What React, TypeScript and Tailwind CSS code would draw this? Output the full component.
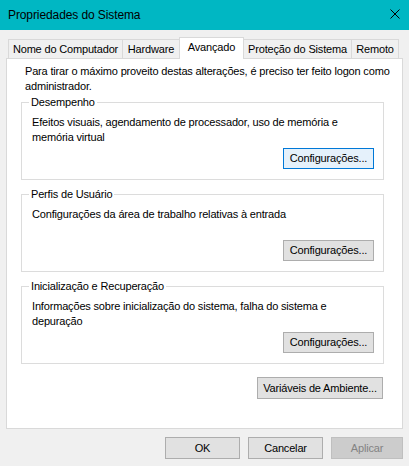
import React from "react";

const tabs = [
  { label: "Nome do Computador", w: "w-[115px]" },
  { label: "Hardware", w: "w-[58px]" },
  { label: "Avançado", w: "w-[65px]", active: true },
  { label: "Proteção do Sistema", w: "w-[109px]" },
  { label: "Remoto", w: "w-[48px]" },
];

function Btn({
  children,
  className = "",
  focused,
  disabled,
}: {
  children: React.ReactNode;
  className?: string;
  focused?: boolean;
  disabled?: boolean;
}) {
  const tone = disabled
    ? "bg-[#cccccc] border-[#bfbfbf] text-[#838383]"
    : focused
      ? "bg-[#e5f1fb] border-[#0078d7] text-black"
      : "bg-[#e1e1e1] border-[#adadad] text-black";
  return (
    <button className={`flex items-center justify-center border whitespace-nowrap leading-[15px] ${tone} ${className}`}>
      {children}
    </button>
  );
}

function Group({
  title,
  text,
  focused,
  className = "",
}: {
  title: string;
  text: React.ReactNode;
  focused?: boolean;
  className?: string;
}) {
  return (
    <fieldset className={`ml-[14px] w-[363px] border border-[#dcdcdc] pl-[10px] pr-[9px] pb-[10px] ${className}`}>
      <legend className="-ml-[3px] px-[2px] leading-[15px]">{title}</legend>
      <div className="mt-[5px] h-[30px] pr-[20px]">{text}</div>
      <div className="mt-[3px] flex justify-end">
        <Btn focused={focused} className="w-[91px] h-[21px]">
          Configurações...
        </Btn>
      </div>
    </fieldset>
  );
}

export default function App() {
  return (
    <div className="w-[409px] h-[466px] bg-[#f0f0f0] flex flex-col text-[11px] tracking-[-0.17px] leading-[15px] text-black font-['Liberation_Sans',Arial,sans-serif] overflow-hidden">
      <div className="h-[30px] shrink-0 bg-[#00b7c3] flex items-center pl-[8px] pr-[9px]">
        <span className="flex-1 text-[12px] tracking-[-0.1px]">Propriedades do Sistema</span>
        <svg width="10" height="10" viewBox="0 0 10 10" className="mt-[-2px]">
          <path d="M0.5 0.5L9.5 9.5M9.5 0.5L0.5 9.5" stroke="#000" strokeWidth="1" />
        </svg>
      </div>

      <div className="pt-[7px] px-[6px]">
        <div className="flex items-end h-[21px] pl-[2px]">
          {tabs.map((t, i) => (
            <div
              key={t.label}
              className={`${t.w} ${i > 0 ? "-ml-px" : ""} whitespace-nowrap border border-b-0 border-[#d9d9d9] flex items-center justify-center ${
                t.active ? "h-[22px] -mb-px bg-white relative z-10 pb-[2px]" : "h-[19px] bg-[#f0f0f0]"
              }`}
            >
              {t.label}
            </div>
          ))}
        </div>

        <div className="h-[371px] border border-[#d9d9d9] bg-white">
          <p className="pt-[5px] pl-[18px] pr-[10px]">
            Para tirar o máximo proveito destas alterações, é preciso ter feito logon como administrador.
          </p>

          <Group
            className="mt-[1px]"
            title="Desempenho"
            focused
            text="Efeitos visuais, agendamento de processador, uso de memória e memória virtual"
          />
          <Group
            className="mt-[7px]"
            title="Perfis de Usuário"
            text="Configurações da área de trabalho relativas à entrada"
          />
          <Group
            className="mt-[7px]"
            title="Inicialização e Recuperação"
            text="Informações sobre inicialização do sistema, falha do sistema e depuração"
          />

          <div className="ml-[14px] w-[363px] mt-[13px] flex justify-end">
            <Btn className="w-[126px] h-[22px] mr-px">Variáveis de Ambiente...</Btn>
          </div>
        </div>
      </div>

      <div className="mt-[8px] flex justify-end gap-[8px] pr-[6px]">
        <Btn className="w-[75px] h-[22px]">OK</Btn>
        <Btn className="w-[75px] h-[22px]">Cancelar</Btn>
        <Btn disabled className="w-[72px] h-[22px]">
          Aplicar
        </Btn>
      </div>
    </div>
  );
}
